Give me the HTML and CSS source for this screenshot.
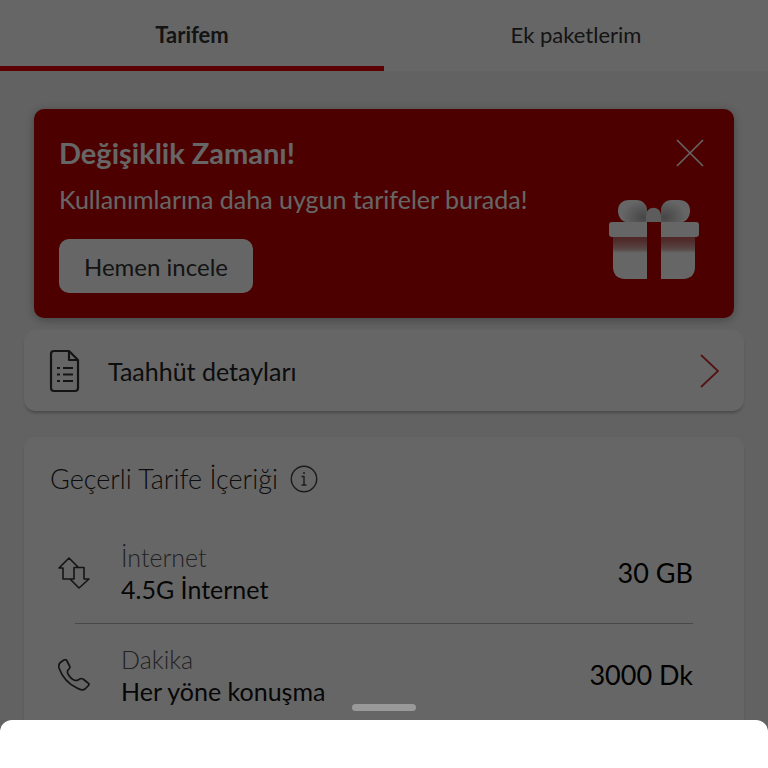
FILE: index.html
```html
<!DOCTYPE html>
<html lang="tr">
<head>
<meta charset="utf-8">
<meta name="viewport" content="width=device-width, initial-scale=1">
<title>Tarifem</title>
<link rel="stylesheet" href="styles.css">
</head>
<body>
<nav class="tabs">
  <button class="tab tab-active" type="button">Tarifem</button>
  <button class="tab" type="button">Ek paketlerim</button>
</nav>
<main class="page">
  <section class="promo">
    <div class="promo-text">
      <h1 class="promo-title">Değişiklik Zamanı!</h1>
      <p class="promo-desc">Kullanımlarına daha uygun tarifeler burada!</p>
      <button class="promo-button" type="button">Hemen incele</button>
    </div>
    <div class="promo-side">
      <button class="close" type="button" aria-label="Kapat">
        <svg width="28" height="28" viewBox="0 0 28 28" fill="none" stroke="#fff" stroke-width="1.6"><path d="M1 1 27 27M27 1 1 27"/></svg>
      </button>
      <svg class="gift" width="92" height="80" viewBox="0 0 92 80" aria-hidden="true">
        <defs>
          <linearGradient id="box" x1="0" y1="0" x2="0" y2="1">
            <stop offset="0" stop-color="#c96060"/>
            <stop offset=".12" stop-color="#c97070"/>
            <stop offset=".3" stop-color="#dcb0b0"/>
            <stop offset=".4" stop-color="#fff"/>
          </linearGradient>
          <radialGradient id="bowl" cx=".88" cy=".75" r=".75">
            <stop offset="0" stop-color="#b0b0b0"/><stop offset="1" stop-color="#fff"/>
          </radialGradient>
          <radialGradient id="bowr" cx=".12" cy=".75" r=".75">
            <stop offset="0" stop-color="#b0b0b0"/><stop offset="1" stop-color="#fff"/>
          </radialGradient>
        </defs>
        <path fill="url(#bowl)" d="M21 0h7c7 0 11 5 11 10v13H22C15 23 10 18 10 11 10 4 14 0 21 0Z"/>
        <path fill="url(#bowr)" d="M71 0h-7c-7 0-11 5-11 10v13h17c7 0 12-5 12-12C82 4 78 0 71 0Z"/>
        <path fill="#e6e6e6" d="M38 22V16c0-11 15-11 15 0v6Z"/>
        <path fill="url(#box)" d="M5 36h34v43H17C9 79 5 74 5 67ZM53 36h34v31c0 7-4 12-12 12H53Z"/>
        <path fill="#fff" d="M4 22h35v15H4q-3 0-3-3v-9q0-3 3-3ZM53 22h35q3 0 3 3v9q0 3-3 3H53Z"/>
      </svg>
    </div>
  </section>

  <a class="card commitment" href="#">
    <svg class="doc" width="32" height="44" viewBox="0 0 32 44" fill="none" stroke="#333" stroke-width="2.2" aria-hidden="true">
      <path d="M5 2h15l9 9v28q0 3-3 3H5q-3 0-3-3V5q0-3 3-3ZM20 2v9h9" stroke-linejoin="round"/>
      <path d="M8 19h3M14 19h10M8 25.500h3M14 25.500h10M8 32h3M14 32h10"/>
    </svg>
    <span class="commitment-label">Taahhüt detayları</span>
    <svg width="20" height="34" viewBox="0 0 20 34" fill="none" stroke="#cf3030" stroke-width="1.800" aria-hidden="true"><path d="m1 1 17 16L1 33"/></svg>
  </a>

  <section class="card plan">
    <div class="plan-head">
      <h2 class="plan-title">Geçerli Tarife İçeriği</h2>
      <svg width="28" height="28" viewBox="0 0 28 28" fill="none" stroke="#444" stroke-width="1.400" aria-hidden="true">
        <circle cx="14" cy="14" r="12.700"/><path d="M11.500 11.500H14V20M11.500 20h5"/><circle cx="14" cy="8" r="1" fill="#444" stroke="none"/>
      </svg>
    </div>
    <ul class="usage">
      <li class="row">
        <svg class="row-icon" width="32" height="32" viewBox="0 0 32 32" fill="none" stroke="#333" stroke-width="1.600" stroke-linejoin="round" aria-hidden="true">
          <path d="M1 11 11 1l9.500 9.500H16V22H5V11ZM16 10.500h10V22h5L21 31l-9-9h4"/>
        </svg>
        <div class="row-text"><span class="row-kind">İnternet</span><span class="row-name">4.5G İnternet</span></div>
        <strong class="row-value">30 GB</strong>
      </li>
      <li class="row">
        <svg class="row-icon" width="32" height="32" viewBox="0 0 32 32" fill="none" stroke="#333" stroke-width="1.700" stroke-linejoin="round" aria-hidden="true">
          <path d="M3 3 6 1Q8 0 9 2l3 6q0 1-1 2l-1 1q-1 2 0 4 3 5 6 6 2 1 4 0l2-1q1-1 3 0l5 4q2 1 0 3l-3 3q-3 2-8-1Q6 23 1 9 0 5 3 3Z"/>
        </svg>
        <div class="row-text"><span class="row-kind">Dakika</span><span class="row-name">Her yöne konuşma</span></div>
        <strong class="row-value">3000 Dk</strong>
      </li>
    </ul>
  </section>
</main>
<div class="scrim"></div>
<div class="drawer">
  <div class="handle"></div>
  <div class="sheet"></div>
</div>
</body>
</html>
```

FILE: styles.css
```css
* { box-sizing: border-box; }

body {
  display: flex;
  flex-direction: column;
  margin: 0;
  min-height: 100vh;
  background: #f4f4f4;
  color: #333;
  font-family: Lato, "Noto Sans", sans-serif;
  font-size: 25px;
  line-height: 32px;
}

h1, h2, p, ul { margin: 0; padding: 0; }
button { border: 0; padding: 0; background: none; color: inherit; font: inherit; }
svg { display: block; flex: none; }

.tabs { display: flex; background: #fff; }
.tab {
  flex: 1;
  height: 71px;
  padding-top: 4px;
  border-bottom: 5px solid transparent;
  font-size: 22px;
}
.tab-active { border-color: #e60000; font-weight: 700; }

.page {
  display: flex;
  flex: 1;
  flex-direction: column;
  padding: 38px 24px 0;
}

.promo {
  display: flex;
  justify-content: space-between;
  margin: 0 10px 12px;
  padding: 28px 25px 25px;
  border-radius: 10px;
  background: #be0000;
  color: #fff;
  box-shadow: 0 2px 8px rgba(0, 0, 0, .3);
}
.promo-title { font-size: 29px; font-weight: 700; line-height: 32px; }
.promo-desc { margin: 14px 0 24px; }
.promo-button {
  height: 54px;
  padding: 2px 25px 0;
  border-radius: 10px;
  background: #fff;
  color: #333;
  font-size: 24px;
}
.promo-side { display: flex; flex-direction: column; align-items: flex-end; }
.close { margin: 2px 5px 33px 0; }
.gift { margin-right: 9px; }

.card {
  border-radius: 12px;
  background: #fff;
  box-shadow: 0 3px 3px -1px rgba(0, 0, 0, .25);
}
.commitment {
  display: flex;
  align-items: center;
  height: 81px;
  margin-bottom: 26px;
  padding: 0 24px 0 25px;
  color: #222;
  text-decoration: none;
}
.commitment-label { flex: 1; margin-left: 27px; }

.plan { flex: 1; padding: 26px 51px 0 26px; }
.plan-head { display: flex; align-items: center; gap: 12px; }
.plan-title { color: #222; font-size: 27px; font-weight: 300; line-height: 32px; }
.usage { margin-top: 26px; list-style: none; }
.row { display: flex; align-items: center; padding: 20px 0 18px 8px; position: relative; }
.row + .row::before {
  content: "";
  position: absolute;
  top: 0;
  left: 25px;
  right: 0;
  border-top: 1px solid #b4b4b4;
}
.row-icon { margin-right: 31px; }
.row-text { display: flex; flex: 1; flex-direction: column; }
.row-kind { color: #555; font-weight: 300; }
.row-name { color: #111; }
.row-value { color: #000; font-size: 27px; font-weight: 400; }

.scrim { position: fixed; inset: 0; background: rgba(0, 0, 0, .6); }
.drawer { position: fixed; right: 0; bottom: 0; left: 0; }
.handle {
  width: 64px;
  height: 7px;
  margin: 0 auto 9px;
  border-radius: 4px;
  background: #999;
}
.sheet { height: 48px; border-radius: 12px 12px 0 0; background: #fff; }
```
